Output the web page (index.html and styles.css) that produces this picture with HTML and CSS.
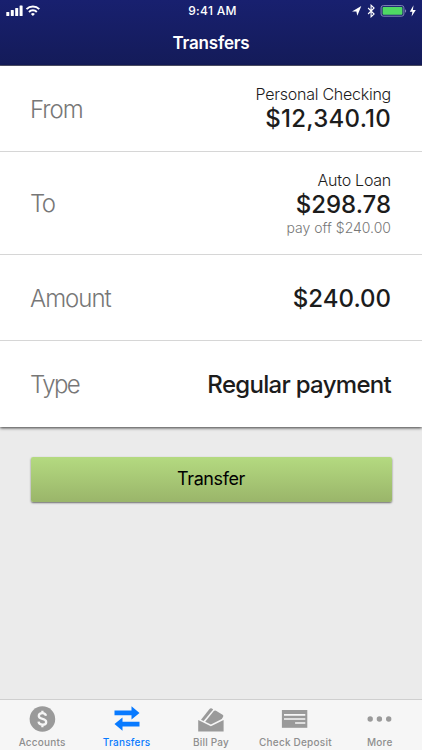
FILE: index.html
```html
<!DOCTYPE html>
<html lang="en">
  <head>
    <meta charset="UTF-8" />
    <meta name="viewport" content="width=device-width, initial-scale=1.0" />
    <title>Transfers</title>
    <link rel="stylesheet" href="styles.css">
  </head>

  <body>
    <header class="header">
      <div class="status">
        <div class="status-left">
          <svg width="35" height="12" viewBox="0 0 35 12" fill="#fff">
            <rect x="0.3" y="7" width="3" height="4" rx=".6" />
            <rect x="4.8" y="5" width="3" height="6" rx=".6" />
            <rect x="9.2" y="3" width="3" height="8" rx=".6" />
            <rect x="13.6" y="0.5" width="3" height="10.5" rx=".6" />
            <g fill="none" stroke="#fff" stroke-width="1.9">
              <path d="M20.5 4.2a8.9 8.9 0 0 1 12.8 0" />
              <path d="M23 7a5.3 5.3 0 0 1 7.8 0" />
            </g>
            <path d="M24.9 8.9a2.8 2.8 0 0 1 4 0l-2 2.2z" />
          </svg>
        </div>
        <span class="time">9:41 AM</span>
        <div class="status-right">
          <svg width="66" height="14" viewBox="0 0 66 14">
            <path d="M1 7.4L10.3 2 6.3 11.7 5.4 7.4z" fill="#fff" />
            <path d="M17.1 4l6 6-3 2.8V1.2l3 2.8-6 6" fill="none" stroke="#fff" stroke-width="1.1" />
            <rect x="30.1" y="1.6" width="22.8" height="10.6" rx="2.2" fill="none" stroke="#8287b8" stroke-width="1" />
            <rect x="31.6" y="3.1" width="19.8" height="7.6" rx=".8" fill="#4fd964" />
            <path d="M54 5.3a1.8 1.8 0 0 1 0 3.4z" fill="#8287b8" />
            <path d="M62.5 1.3L58.8 7.7h2.6l-.8 4.8 4.2-6.6h-2.9z" fill="#fff" />
          </svg>
        </div>
      </div>
      <h1 class="title">Transfers</h1>
    </header>

    <main class="content">
      <div class="card">
        <div class="row">
          <span class="label">From</span>
          <div class="value">
            <p class="account">Personal Checking</p>
            <p class="amount balance">$12,340.10</p>
          </div>
        </div>
        <div class="row row-tall">
          <span class="label label-short">To</span>
          <div class="value">
            <p class="account">Auto Loan</p>
            <p class="amount">$298.78</p>
            <p class="note">pay off $240.00</p>
          </div>
        </div>
        <div class="row">
          <span class="label">Amount</span>
          <p class="amount">$240.00</p>
        </div>
        <div class="row">
          <span class="label label-short">Type</span>
          <p class="amount type">Regular payment</p>
        </div>
      </div>

      <button class="btn" type="button">Transfer</button>
    </main>

    <nav class="tabs">
      <a class="tab">
        <svg width="28" height="28" viewBox="0 0 28 28">
          <circle cx="14.4" cy="14" r="12.8" fill="#9a9a9a" />
          <path d="M18 10.8c-.4-1.9-1.8-2.6-3.6-2.6-2.1 0-3.6 1-3.6 2.7 0 4 7.4 1.9 7.4 6 0 1.8-1.6 2.8-3.7 2.8-2.2 0-3.7-1-4-3M14.4 5.8v3M14.4 19.2v3" fill="none" stroke="#f6f6f6" stroke-width="2.3" />
        </svg>
        <span>Accounts</span>
      </a>
      <a class="tab active">
        <svg width="28" height="28" viewBox="0 0 28 28" fill="#087aff">
          <path d="M1.5 5.5h17V1.3l8 6.7-8 6.5v-4.2h-17z" />
          <path d="M26.5 16.7h-17v-4.2l-8 6.6 8 6.7v-4.2h17z" />
        </svg>
        <span>Transfers</span>
      </a>
      <a class="tab">
        <svg width="28" height="28" viewBox="0 0 28 28" fill="#9a9a9a">
          <path d="M1.2 15.1l12.7 6.2 12.7-6.2v11.4H1.2z" />
          <path d="M4 14.8L12.5 4q1.1-1.2 2.4-.5l1.3.9L6.6 16z" />
          <path d="M8.2 16.8l8.4-10.5q1-1.3 2.4-.6l6.6 4q1.4 1 .4 2.3l-1.2 2-10.9 5.5z" />
        </svg>
        <span>Bill Pay</span>
      </a>
      <a class="tab">
        <svg width="28" height="28" viewBox="0 0 28 28">
          <path d="M.9 5h25.4v17.8H.9z" fill="#9a9a9a" />
          <path d="M3 9.9h21.3M3 14h21.3M14.1 18h10.2" stroke="#f6f6f6" stroke-width="1.7" />
        </svg>
        <span>Check Deposit</span>
      </a>
      <a class="tab">
        <svg width="28" height="28" viewBox="0 0 28 28" fill="#9a9a9a">
          <circle cx="4.2" cy="14" r="2.7" />
          <circle cx="13.4" cy="14" r="2.7" />
          <circle cx="22.7" cy="14" r="2.7" />
        </svg>
        <span>More</span>
      </a>
    </nav>
  </body>
</html>
```
FILE: styles.css
```css
* {
  margin: 0;
  box-sizing: border-box;
}

body {
  height: 750px;
  display: flex;
  flex-direction: column;
  background-color: #ebebeb;
  font-family: Inter, "Liberation Sans", sans-serif;
  color: #1c1c1c;
}

.header {
  height: 66px;
  background: linear-gradient(#18206f, #141b59);
  border-bottom: 1px solid #55576f;
  color: #fff;
}

.status {
  height: 22px;
  display: grid;
  grid-template-columns: 1fr auto 1fr;
  align-items: center;
  padding: 0 5px 0 6px;
}

.status svg {
  display: block;
}

.status-right {
  display: flex;
  justify-content: flex-end;
}

.time {
  padding-left: 2px;
  font-size: 12px;
  font-weight: 500;
  line-height: 22px;
  letter-spacing: 0.3px;
}

.title {
  font-size: 17px;
  font-weight: 600;
  line-height: 42px;
  letter-spacing: -0.2px;
  text-align: center;
}

.content {
  flex: 1;
}

.card {
  background-color: #fff;
  box-shadow: 0 1px 3px rgba(0, 0, 0, 0.75);
}

.row {
  height: 86px;
  padding: 2px 31px 0 30px;
  display: flex;
  align-items: center;
  justify-content: space-between;
  border-bottom: 1px solid #d6d6d6;
}

.row-tall {
  height: 103px;
}

.row:last-child {
  border-bottom: none;
}

.label {
  font-size: 24px;
  font-weight: 300;
  letter-spacing: -1px;
  color: #777;
}

.label-short {
  margin-top: -2px;
  letter-spacing: -1.6px;
}

.value {
  margin-top: -2px;
  text-align: right;
}

.account {
  font-size: 16px;
  font-weight: 300;
  line-height: 20px;
  letter-spacing: -0.25px;
}

.amount {
  font-size: 24px;
  font-weight: 500;
  line-height: 30px;
}

.balance {
  letter-spacing: 0.25px;
}

.type {
  letter-spacing: -0.7px;
}

.note {
  font-size: 14px;
  font-weight: 300;
  line-height: 16px;
  color: #777;
}

.btn {
  display: block;
  width: 361px;
  height: 45px;
  margin: 29.5px auto 0;
  padding-bottom: 3px;
  border: none;
  border-radius: 2px;
  background: linear-gradient(#b4da80, #9ab56a);
  box-shadow: 0 1px 2px rgba(0, 0, 0, 0.55);
  font-family: inherit;
  font-size: 18px;
  letter-spacing: -0.4px;
  color: #000;
}

.tabs {
  height: 51px;
  display: grid;
  grid-template-columns: repeat(5, 1fr);
  border-top: 1px solid #cfcfcf;
  background-color: #f6f6f6;
}

.tab {
  display: flex;
  flex-direction: column;
  align-items: center;
  padding-top: 5px;
  font-size: 10px;
  font-weight: 500;
  line-height: 18px;
  letter-spacing: 0.22px;
  white-space: nowrap;
  color: #8e8e8e;
}

.active {
  color: #087aff;
}
```
